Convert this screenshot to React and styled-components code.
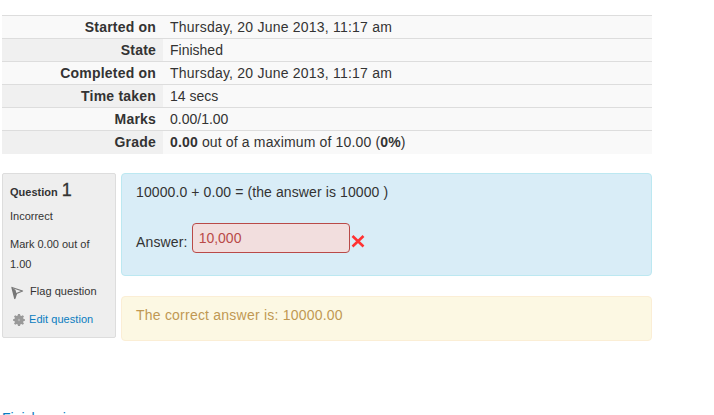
import React from "react";
import styled, { createGlobalStyle } from "styled-components";

const GlobalStyle = createGlobalStyle`
  html, body {
    margin: 0;
    height: 415px;
    overflow: hidden;
    background: #fff;
    font-family: "Liberation Sans", Arial, sans-serif;
    font-size: 14px;
    color: #333;
  }
`;

const Page = styled.div`
  padding: 15px 62px 0 2px;
`;

const Summary = styled.table`
  width: 100%;
  border-collapse: collapse;
  table-layout: fixed;
`;

const Row = styled.tr`
  height: 23px;
  border-top: 1px solid #ddd;
`;

const Label = styled.th`
  width: 161px;
  padding: 0 7px 0 0;
  box-sizing: border-box;
  text-align: right;
  font-weight: 700;
  letter-spacing: 0.2px;
  background: ${({ $odd }) => ($odd ? "#f9f9f9" : "#f0f0f0")};
`;

const Value = styled.td`
  padding: 0 0 0 7px;
  letter-spacing: ${({ $spacing }) => $spacing}px;
  background: #f9f9f9;
`;

const Attempt = styled.div`
  display: flex;
  gap: 5px;
  margin-top: 19px;
`;

const Info = styled.div`
  box-sizing: border-box;
  flex: none;
  width: 114px;
  height: 165px;
  padding: 6px 16px 0 7px;
  background: #eee;
  border: 1px solid #ddd;
  border-radius: 2px;
  font-size: 11px;
  color: #333;
`;

const QuestionNo = styled.h3`
  margin: 0;
  height: 20px;
  font-size: 11px;
  font-weight: 700;
  line-height: 20px;
  color: #333;

  span {
    margin-left: 1px;
    font-size: 18px;
    font-weight: 400;
    -webkit-text-stroke: 0.3px #333;
  }
`;

const InfoLine = styled.div`
  line-height: 20px;
  margin-top: ${({ $gap }) => $gap || 0}px;
`;

const InfoAction = styled.div`
  display: flex;
  align-items: center;
  gap: ${({ $gap }) => $gap}px;
  height: 20px;
  margin-top: ${({ $top }) => $top}px;
  white-space: nowrap;
  letter-spacing: 0.05px;
  color: ${({ $link }) => ($link ? "#0a7cc0" : "#333")};

  svg {
    flex: none;
    margin-left: ${({ $inset }) => $inset || 0}px;
    margin-top: ${({ $drop }) => $drop || 0}px;
  }
`;

const Main = styled.div`
  flex: 1;
  display: flex;
  flex-direction: column;
  gap: 20px;
`;

const Formulation = styled.div`
  box-sizing: border-box;
  height: 103px;
  padding: 8px 14px;
  background: #d9edf7;
  border: 1px solid #bce8f1;
  border-radius: 4px;
  color: #333;
`;

const Prompt = styled.p`
  margin: 0;
  line-height: 20px;
  letter-spacing: 0.1px;
`;

const AnswerRow = styled.div`
  display: flex;
  align-items: center;
  margin-top: 21px;

  svg {
    margin: 7px 0 0 1px;
  }
`;

const AnswerLabel = styled.span`
  margin-top: 8px;
  line-height: 20px;
  letter-spacing: 0.15px;
`;

const AnswerInput = styled.div`
  box-sizing: border-box;
  width: 158px;
  height: 30px;
  margin-left: 4px;
  padding: 0 6px;
  line-height: 29px;
  color: #b94a48;
  background: #f2dede;
  border: 1px solid #b94a48;
  border-radius: 4px;
`;

const Feedback = styled.div`
  box-sizing: border-box;
  height: 45px;
  padding: 0 14px;
  line-height: 36px;
  letter-spacing: 0.22px;
  color: #c09853;
  background: #fcf8e3;
  border: 1px solid #fbeed5;
  border-radius: 4px;
`;

const FinishLink = styled.a`
  display: block;
  margin-top: 67px;
  line-height: 20px;
  color: #0a7cc0;
`;

const rows = [
  ["Started on", "Thursday, 20 June 2013, 11:17 am", 0.22],
  ["State", "Finished", 0],
  ["Completed on", "Thursday, 20 June 2013, 11:17 am", 0.22],
  ["Time taken", "14 secs", 0],
  ["Marks", "0.00/1.00", 0],
  [
    "Grade",
    <>
      <b>0.00</b> out of a maximum of 10.00 (<b>0%</b>)
    </>,
    0.15,
  ],
];

const FlagIcon = () => (
  <svg width="14" height="14" viewBox="0 0 14 14" fill="none">
    <path d="M2 1.5 L12.5 5 L6.5 7.5 L4.8 12.5 Z" stroke="#777" strokeWidth="1.3" strokeLinejoin="round" />
    <path d="M2 1.5 L4.8 12.5 L6.5 7.5 L5.5 4 Z" fill="#777" />
  </svg>
);

const GearIcon = () => (
  <svg width="12" height="12" viewBox="0 0 12 12">
    <path
      d="M5 0h2l.3 1.6 1.1.5L9.8 1.2l1.2 1.2-.9 1.4.5 1.1L12 5.2v1.6l-1.4.3-.5 1.1.9 1.4-1.2 1.2-1.4-.9-1.1.5L7 12H5l-.3-1.6-1.1-.5-1.4.9L1 9.6l.9-1.4-.5-1.1L0 6.8V5.2l1.4-.3.5-1.1L1 2.4l1.2-1.2 1.4.9 1.1-.5z"
      fill="#999"
    />
    <circle cx="6" cy="6" r="1.2" fill="#b5b5b5" />
  </svg>
);

const CrossIcon = () => (
  <svg width="14" height="14" viewBox="0 0 14 14">
    <path d="M1.5 2 L12.5 12.5 M12.5 2 L1.5 12.5" stroke="#f33" strokeWidth="2.6" />
  </svg>
);

export default function App() {
  return (
    <Page>
      <GlobalStyle />
      <Summary>
        <tbody>
          {rows.map(([label, value, spacing], i) => (
            <Row key={label}>
              <Label $odd={i % 2 === 0}>{label}</Label>
              <Value $spacing={spacing}>{value}</Value>
            </Row>
          ))}
        </tbody>
      </Summary>
      <Attempt>
        <Info>
          <QuestionNo>
            Question <span>1</span>
          </QuestionNo>
          <InfoLine $gap={6}>Incorrect</InfoLine>
          <InfoLine $gap={8}>Mark 0.00 out of 1.00</InfoLine>
          <InfoAction $gap={6} $top={7} $drop={4}>
            <FlagIcon />
            Flag question
          </InfoAction>
          <InfoAction $gap={4} $top={8} $inset={3} $drop={2} $link>
            <GearIcon />
            Edit question
          </InfoAction>
        </Info>
        <Main>
          <Formulation>
            <Prompt>10000.0 + 0.00 = (the answer is 10000 )</Prompt>
            <AnswerRow>
              <AnswerLabel>Answer:</AnswerLabel>
              <AnswerInput>10,000</AnswerInput>
              <CrossIcon />
            </AnswerRow>
          </Formulation>
          <Feedback>The correct answer is: 10000.00</Feedback>
        </Main>
      </Attempt>
      <FinishLink href="#">Finish review</FinishLink>
    </Page>
  );
}
